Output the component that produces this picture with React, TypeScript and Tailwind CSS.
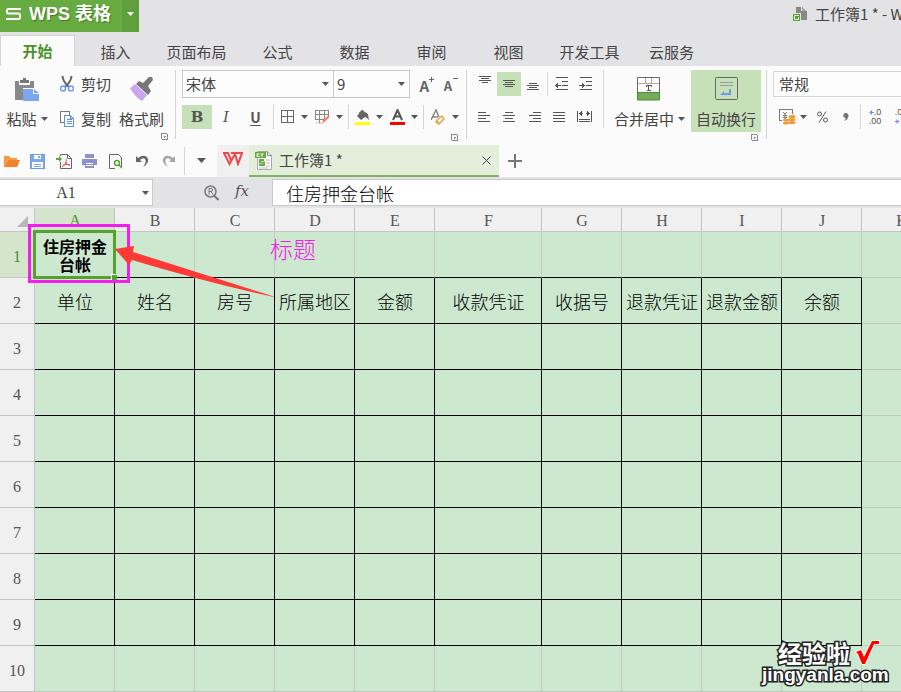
import type { ReactNode } from 'react'
import clsx from 'clsx'

const MENU = [
  { label: '插入', width: 'w-[77px]' },
  { label: '页面布局', width: 'w-[85px]' },
  { label: '公式', width: 'w-[77px]' },
  { label: '数据', width: 'w-[77px]' },
  { label: '审阅', width: 'w-[77px]' },
  { label: '视图', width: 'w-[77px]' },
  { label: '开发工具', width: 'w-[85px]' },
  { label: '云服务', width: 'w-[79px]' },
]

const COLUMNS = ['A', 'B', 'C', 'D', 'E', 'F', 'G', 'H', 'I', 'J', 'K']
const HEADINGS = ['单位', '姓名', '房号', '所属地区', '金额', '收款凭证', '收据号', '退款凭证', '退款金额', '余额']
const ROWS = [1, 2, 3, 4, 5, 6, 7, 8, 9, 10]

function Caret({ className = 'text-[#555]' }: { className?: string }) {
  return (
    <svg className={clsx('shrink-0', className)} width="7" height="4" viewBox="0 0 7 4" fill="currentColor">
      <path d="M0 0h7L3.5 4z" />
    </svg>
  )
}

function Launcher({ label }: { label: string }) {
  return (
    <button aria-label={label} className="block h-[7px] w-[7px] self-end">
      <svg width="7" height="7" viewBox="0 0 7 7" fill="none" stroke="#888" shapeRendering="crispEdges">
        <path d="M.5 6V.5H6M6.500 1v5.500H1M3.500 5V3.500H5" />
      </svg>
    </button>
  )
}

function Lines({ rows, className }: { rows: [number, number, number][]; className?: string }) {
  return (
    <svg className={className} width="14" height="14" viewBox="0 0 14 14" stroke="#555" strokeWidth="1" shapeRendering="crispEdges">
      {rows.map(([x, y, w]) => (
        <path key={y} d={`M${x} ${y}.5h${w}`} />
      ))}
    </svg>
  )
}

function Tool({ label, className, children }: { label: string; className?: string; children: ReactNode }) {
  return (
    <button aria-label={label} className={clsx('flex h-6 shrink-0 items-center justify-center', className)}>
      {children}
    </button>
  )
}

function Divider({ className }: { className: string }) {
  return <div className={clsx('w-px shrink-0 bg-[#d4d4d4]', className)} />
}

function TitleBar() {
  return (
    <header className="flex h-8 items-start bg-[#e3e3e5]">
      <button className="flex h-8 w-[122px] items-center bg-[#67ab41] pb-1 pl-1.5 font-['Liberation_Sans','Noto_Sans_CJK_SC',sans-serif] text-lg leading-6 font-bold whitespace-nowrap text-white [text-shadow:1px_1px_1px_#3f7a22]">
        <svg className="mr-2" width="15" height="12" viewBox="0 0 15 12" fill="none" stroke="#fff" strokeWidth="2">
          <path d="M15 1H2.5Q1 1 1 2.5V4Q1 5.5 2.5 5.5h10Q14 5.5 14 7v2.5Q14 11 12.500 11H0" />
        </svg>
        WPS 表格
      </button>
      <button aria-label="应用菜单" className="flex h-8 w-[17px] items-center justify-center bg-[#5f9f3c] pb-1">
        <Caret className="text-white" />
      </button>
      <div className="ml-auto flex w-[108px] items-center overflow-hidden pt-1 text-[15px] leading-5 whitespace-nowrap text-[#444]">
        <svg className="mr-2 shrink-0" width="14" height="15" viewBox="0 0 14 15" shapeRendering="crispEdges">
          <path d="M3 0h5v4h6v9H8V6H3z" fill="#888" />
          <path d="M9 0l5 4H9z" fill="#aaa" />
          <path d="M.5 7.500h6v6h-6z" fill="#e3e3e5" stroke="#4ea72a" />
          <path d="M5.500 9.500h-3v1h2v1h-3" fill="none" stroke="#4ea72a" />
        </svg>
        工作簿1 * - WPS 表格
      </div>
    </header>
  )
}

function MenuTabs() {
  return (
    <nav className="flex h-[34px] items-end bg-[#e3e3e5] text-[15px] leading-5 whitespace-nowrap text-[#444]">
      <button className="mr-[2px] h-[31px] w-[75px] border border-b-0 border-[#d3d3d6] bg-[#fbfbfb] font-bold text-[#4a9128]">开始</button>
      {MENU.map((item) => (
        <button key={item.label} className={clsx('h-[29px] shrink-0', item.width)}>
          {item.label}
        </button>
      ))}
    </nav>
  )
}

function ClipboardGroup() {
  return (
    <div className="flex w-[175px] shrink-0 pl-1.5">
      <button className="flex w-[42px] flex-col items-center pt-2">
        <svg width="24" height="24" viewBox="0 0 24 24">
          <path d="M0 3h4v4h11V3h4v7H8v12H0z" fill="#888" />
          <path d="M5 2h3V0h3v2h3v3H5z" fill="#777" />
          <path d="M8 11h10v5h6v7H8z" fill="#7ea6ee" />
          <path d="M19 11l5 4h-5z" fill="#7ea6ee" />
        </svg>
        <span className="flex items-center gap-1 pt-[7px]">
          粘贴 <Caret />
        </span>
      </button>
      <div className="flex flex-col gap-[15px] pt-1 pl-3">
        <button className="flex items-center gap-[7px]">
          <svg width="14" height="16" viewBox="0 0 14 16" fill="none" strokeWidth="1.500">
            <path d="M2.500 0Q3 6 9 11M11.500 0Q11 6 5 11" stroke="#666" strokeWidth="2" />
            <circle cx="3" cy="12.500" r="2.500" stroke="#6f9ae6" />
            <circle cx="11" cy="12.500" r="2.500" stroke="#6f9ae6" />
          </svg>
          剪切
        </button>
        <button className="flex items-center gap-[7px]">
          <svg width="14" height="16" viewBox="0 0 14 16" fill="none" shapeRendering="crispEdges">
            <path d="M3.500 11.500h-3V.5h9v3" stroke="#777" />
            <path d="M4.500 4.500h6l3 3v8h-9zM10.500 4.500v3h3M6.500 8.500h5M6.500 10.500h5M6.500 12.500h5" stroke="#5f90e4" />
          </svg>
          复制
        </button>
      </div>
      <button className="flex flex-col items-center pt-[7px] pl-2">
        <svg width="24" height="24" viewBox="0 0 24 24">
          <path d="M5 7l12 11-5 6q-7-4-12-13 2-1 5-4z" fill="#caa5f0" />
          <path d="M9 4l4 2 6-6h3l1 3-5 6 3 5-3 4L6 7z" fill="#777" />
        </svg>
        <span className="pt-2">格式刷</span>
      </button>
      <div className="-ml-[3px] flex h-[70px] items-end">
        <Launcher label="剪贴板设置" />
      </div>
    </div>
  )
}

function FontGroup() {
  return (
    <div className="flex w-[290px] shrink-0 flex-col pl-1.5">
      <div className="flex h-7 items-stretch">
        <label className="flex w-[152px] items-center border border-[#c8c8c8] bg-[#fdfdfd] pr-1 pl-[3px]">
          <select aria-label="字体" className="min-w-0 flex-1 appearance-none leading-5 outline-none">
            <option>宋体</option>
          </select>
          <Caret />
        </label>
        <label className="-ml-px flex w-[77px] items-center border border-[#c8c8c8] bg-[#fdfdfd] pr-1 pl-[3px]">
          <select aria-label="字号" className="min-w-0 flex-1 appearance-none leading-5 outline-none">
            <option>9</option>
          </select>
          <Caret />
        </label>
        <button aria-label="增大字号" className="flex w-6 items-center justify-end font-bold text-[#666]">
          <span className="pt-1 text-[15px] leading-5">A</span>
          <svg className="mt-[7px] self-start" width="5" height="5" viewBox="0 0 5 5" fill="#666">
            <path d="M2 0h1v2h2v1H3v2H2V3H0V2h2z" />
          </svg>
        </button>
        <button aria-label="减小字号" className="flex w-6 items-center justify-end font-bold text-[#666]">
          <span className="pt-1 text-[13px] leading-5">A</span>
          <svg className="mt-2 self-start" width="6" height="2" viewBox="0 0 6 2" fill="#666">
            <path d="M1 0h5v1H1z" />
          </svg>
        </button>
      </div>
      <div className="mt-[7px] flex h-6 items-center text-[#555]">
        <Tool label="加粗" className="w-[30px] bg-[#c6e0b8] font-['DejaVu_Serif',serif] text-[15px] font-bold">B</Tool>
        <Tool label="倾斜" className="w-7 font-['DejaVu_Serif',serif] text-[15px] italic">I</Tool>
        <Tool label="下划线" className="w-[31px] text-sm leading-5 font-bold underline underline-offset-2">U</Tool>
        <Divider className="mr-[7px] ml-[2px] h-6" />
        <Tool label="边框" className="w-[27px] gap-1.5">
          <svg width="14" height="14" viewBox="0 0 14 14" fill="none" stroke="#666" shapeRendering="crispEdges">
            <path d="M.5.5h12v12H.5zM6.500 1v12M1 6.500h12" />
          </svg>
          <Caret />
        </Tool>
        <Tool label="绘图边框" className="ml-[7px] w-7 gap-1.5">
          <svg width="15" height="14" viewBox="0 0 15 14" fill="none" stroke="#888">
            <path d="M.5 10V.5h13v5M1 4.500h12M1 9.500h8M4.500 1v12M9.500 1v8" shapeRendering="crispEdges" />
            <path d="M14 6L8 12" stroke="#ee7f4b" strokeWidth="2" />
            <path d="M1 13h7" stroke="#ee7f4b" strokeDasharray="1 1" />
          </svg>
          <Caret />
        </Tool>
        <Divider className="mr-1.5 ml-[5px] h-6" />
        <Tool label="填充颜色" className="w-7 gap-1.5">
          <svg width="15" height="16" viewBox="0 0 15 16">
            <path d="M7 1l6 4 1 6-2-2-2-1-4 3-4-4z" fill="#666" />
            <path d="M4 4l4-3" stroke="#666" />
            <path d="M0 13h15v3H0z" fill="#ff0" />
          </svg>
          <Caret />
        </Tool>
        <Tool label="字体颜色" className="ml-[7px] w-7 gap-1.5">
          <svg width="15" height="16" viewBox="0 0 15 16">
            <path d="M3 11L7.500 1 12 11M4.500 7.500h6" fill="none" stroke="#555" strokeWidth="2" />
            <path d="M0 13h15v3H0z" fill="#f00" />
          </svg>
          <Caret />
        </Tool>
        <Divider className="mr-[7px] ml-[5px] h-6" />
        <Tool label="清除格式" className="w-7 gap-1.5">
          <svg width="15" height="16" viewBox="0 0 15 16" fill="none">
            <path d="M0 11L5 1l3 7M2 8h5" stroke="#888" strokeWidth="1.500" />
            <path d="M6 11l5-4 2 3-5 5-3-2z" stroke="#eaa24c" strokeWidth="1.500" />
            <path d="M6 11l3 3-1 1-3-2z" fill="#eaa24c" />
          </svg>
          <Caret />
        </Tool>
      </div>
      <div className="flex justify-end pt-[5px] pr-2">
        <Launcher label="字体设置" />
      </div>
    </div>
  )
}

function AlignGroup() {
  return (
    <div className="flex w-[136px] shrink-0 flex-col pl-1.5 pt-[2px]">
      <div className="flex h-6 items-center">
        <Tool label="顶端对齐" className="w-6">
          <Lines className="mb-2" rows={[[1, 3, 12], [3, 5, 8], [1, 7, 12], [4, 9, 6]]} />
        </Tool>
        <Tool label="垂直居中" className="w-6 bg-[#c6e0b8]">
          <Lines rows={[[1, 3, 12], [3, 5, 8], [1, 7, 12], [3, 9, 8]]} />
        </Tool>
        <Tool label="底端对齐" className="w-6">
          <Lines className="mt-1" rows={[[3, 4, 8], [1, 6, 12], [3, 8, 8], [1, 10, 12]]} />
        </Tool>
        <Divider className="mx-[2px] h-6" />
        <Tool label="减少缩进" className="w-6">
          <svg width="14" height="14" viewBox="0 0 14 14" stroke="#555" fill="#555" shapeRendering="crispEdges">
            <path d="M1 .5h12M7 4.500h6M7 8.500h6M1 12.500h12M2 8.500h4" fill="none" />
            <path d="M0 8.500l3-3v6z" stroke="none" />
          </svg>
        </Tool>
        <Tool label="增加缩进" className="w-6">
          <svg width="14" height="14" viewBox="0 0 14 14" stroke="#555" fill="#555" shapeRendering="crispEdges">
            <path d="M1 .5h12M7 4.500h6M7 8.500h6M1 12.500h12M0 8.500h4" fill="none" />
            <path d="M6 8.500l-3-3v6z" stroke="none" />
          </svg>
        </Tool>
      </div>
      <div className="mt-[9px] flex h-6 items-center">
        <Tool label="左对齐" className="w-[22px]">
          <Lines rows={[[1, 2, 8], [1, 5, 12], [1, 8, 8], [1, 11, 12]]} />
        </Tool>
        <Tool label="居中" className="w-7">
          <Lines rows={[[3, 2, 8], [1, 5, 12], [3, 8, 8], [1, 11, 12]]} />
        </Tool>
        <Tool label="右对齐" className="w-6">
          <Lines rows={[[5, 2, 8], [1, 5, 12], [5, 8, 8], [1, 11, 12]]} />
        </Tool>
        <Tool label="两端对齐" className="w-6">
          <Lines rows={[[1, 2, 12], [1, 5, 12], [1, 8, 12], [1, 11, 12]]} />
        </Tool>
        <Tool label="分散对齐" className="w-[26px]">
          <svg width="15" height="12" viewBox="0 0 15 12" stroke="#555" fill="#555" shapeRendering="crispEdges">
            <path d="M.5 0v11M14.500 0v11M3 2.500h3M9 2.500h3M2 8.500h11M2 10.500h11" fill="none" />
            <path d="M2 2.500l3-3v6zM13 2.500l-3-3v6z" stroke="none" />
          </svg>
        </Tool>
      </div>
    </div>
  )
}

function MergeGroup() {
  return (
    <div className="flex w-[162px] shrink-0">
      <button className="flex w-[87px] flex-col items-center pt-[7px]">
        <svg className="ml-[2px]" width="23" height="24" viewBox="0 0 23 24" fill="none">
          <path d="M.5.5h22v22H.5z" fill="#fff" stroke="#666" />
          <path d="M1 6.500h21M8.500 1v5M14.500 1v5" stroke="#aaa" shapeRendering="crispEdges" />
          <path d="M.5 15.500h22v7.500H.5z" fill="#76ac59" stroke="#4f8d34" />
          <path d="M9.500 10V8.500h5V10M11.500 8.500v5M10 13.500h4" stroke="#555" />
        </svg>
        <span className="flex items-center gap-1 pt-2 pl-1">
          合并居中 <Caret />
        </span>
      </button>
      <div className="w-[70px]">
        <button className="flex h-[62px] w-[70px] flex-col items-center bg-[#c6e0b8] pt-[7px]">
          <svg width="23" height="24" viewBox="0 0 23 24" fill="none">
            <rect x=".5" y=".5" width="22" height="22" rx="1" stroke="#666" />
            <path d="M5 5.500h13M5 8.500h13" stroke="#999" shapeRendering="crispEdges" />
            <path d="M14 12h2v6H5l4-4v2h5z" fill="#6f9ae6" />
          </svg>
          <span className="pt-2">自动换行</span>
        </button>
        <div className="flex justify-end pt-[2px] pr-[3px]">
          <Launcher label="对齐设置" />
        </div>
      </div>
    </div>
  )
}

function NumberGroup() {
  return (
    <div className="flex min-w-0 flex-1 flex-col overflow-hidden pt-px pl-1.5">
      <label className="flex h-[26px] w-[180px] items-center border border-[#d4d4d4] bg-[#fdfdfd] pl-[5px]">
        <select aria-label="数字格式" className="min-w-0 flex-1 appearance-none leading-5 outline-none">
          <option>常规</option>
        </select>
      </label>
      <div className="mt-2 flex h-6 items-center pl-1.5 text-[#555]">
        <Tool label="货币样式" className="w-7 gap-1">
          <svg width="17" height="16" viewBox="0 0 17 16" fill="none">
            <path d="M3 11.500H.5V.5h13V5" stroke="#777" shapeRendering="crispEdges" />
            <path d="M4 3l2 2 2-2M6 5v5M4 6.500h4M4 8.500h4" stroke="#777" />
            <g fill="#ee9a32">
              <ellipse cx="13" cy="7.500" rx="3.500" ry="1.500" />
              <ellipse cx="13" cy="10.500" rx="3.500" ry="1.500" />
              <ellipse cx="13" cy="13.500" rx="3.500" ry="1.500" />
              <ellipse cx="7" cy="11" rx="3" ry="1.500" />
              <ellipse cx="7" cy="14" rx="3" ry="1.500" />
            </g>
          </svg>
          <Caret />
        </Tool>
        <Tool label="百分比" className="w-[30px]">
          <svg width="11" height="12" viewBox="0 0 11 12" fill="none" stroke="#555">
            <circle cx="2.500" cy="3" r="2" />
            <circle cx="8.500" cy="9" r="2" />
            <path d="M9 .5l-7 11" />
          </svg>
        </Tool>
        <Tool label="千位分隔" className="w-[18px]">
          <svg width="6" height="8" viewBox="0 0 6 8" fill="#777">
            <path d="M3 0a2.500 2.500 0 012.500 3Q5 7 1 8q1.500-1.500 1.500-3A2.500 2.500 0 013 0z" />
          </svg>
        </Tool>
        <Divider className="mr-[7px] ml-[5px] h-6" />
        <Tool label="增加小数位" className="w-[14px] flex-col font-['Liberation_Sans',sans-serif] text-[9px] leading-[9px]">
          <span className="flex items-center">
            <svg width="5" height="5" viewBox="0 0 5 5" fill="#6f9ae6"><path d="M0 2.500L3 0v2h2v1H3v2z" /></svg>
            .0
          </span>
          <span>.00</span>
        </Tool>
        <Tool label="减少小数位" className="ml-3 w-[14px] flex-col font-['Liberation_Sans',sans-serif] text-[9px] leading-[9px]">
          <span>.00</span>
          <span className="flex items-center">
            <svg width="6" height="5" viewBox="0 0 5 5" fill="#6f9ae6"><path d="M5 2.500L2 0v2H0v1h2v2z" /></svg>
            .0
          </span>
        </Tool>
      </div>
    </div>
  )
}

function Ribbon() {
  return (
    <section className="flex h-[79px] items-start overflow-hidden bg-[#fbfbfb] pt-1 text-[15px] leading-5 whitespace-nowrap text-[#444]">
      <ClipboardGroup />
      <Divider className="h-[69px]" />
      <FontGroup />
      <Divider className="h-[69px]" />
      <AlignGroup />
      <Divider className="h-[58px]" />
      <MergeGroup />
      <Divider className="h-[69px]" />
      <NumberGroup />
    </section>
  )
}

function QuickAccess() {
  return (
    <section className="flex h-8 items-stretch bg-[#fbfbfb] text-[15px] leading-5 text-[#444]">
      <div className="flex w-[184px] items-center">
        <Tool label="打开" className="w-[23px]">
          <svg width="16" height="14" viewBox="0 0 16 14">
            <path d="M0 13V2h5l2 2h6v2H4z" fill="#f79a45" />
            <path d="M4 6h12l-3 7H0z" fill="#f2832a" />
          </svg>
        </Tool>
        <Tool label="保存" className="w-[29px]">
          <svg width="15" height="15" viewBox="0 0 15 15" fill="none" shapeRendering="crispEdges">
            <path d="M.5.5h14v14H.5z" fill="#7ea6ee" stroke="#6f9ae6" />
            <path d="M4 1h7v4H4zM2 8h11v6H2z" fill="#fff" />
            <path d="M8 2h2v2H8zM4 10h7v1H4zM4 12h7v1H4z" fill="#7ea6ee" />
          </svg>
        </Tool>
        <Tool label="输出为PDF" className="w-6">
          <svg width="16" height="15" viewBox="0 0 16 15" fill="none">
            <path d="M4.500 2V.5h7l4 4v10h-11V8M11.500.5v4h4" stroke="#666" />
            <path d="M0 4h3V2l3 3-3 3V6H0z" fill="#5aa637" />
            <path d="M10 5c1 5-1 6-4 8M9 8c2 3 4 3 5 3M7 11c2-1 4-1 7 0" stroke="#dd4b42" />
          </svg>
        </Tool>
        <Tool label="打印" className="w-[27px]">
          <svg width="15" height="14" viewBox="0 0 15 14" shapeRendering="crispEdges">
            <path d="M3 0h9v4H3zM0 5h15v6H0zM3 9h9v5H3z" fill="#8e90cd" />
            <path d="M4 9h7v1H4zM4 11h7v1H4z" fill="#fff" />
          </svg>
        </Tool>
        <Tool label="打印预览" className="w-[26px]">
          <svg width="14" height="15" viewBox="0 0 14 15" fill="none">
            <path d="M6 14.500H.5V.5h9l3 3V14" stroke="#666" />
            <circle cx="8" cy="9" r="2.500" stroke="#5aa637" strokeWidth="1.500" />
            <path d="M10 11l3 3" stroke="#5aa637" strokeWidth="1.500" />
          </svg>
        </Tool>
        <Tool label="撤销" className="w-[26px]">
          <svg width="13" height="13" viewBox="0 0 13 13" fill="#666">
            <path d="M0 1v6h6L4 5q3-3 5-1 2 3-2 8 6-4 5-8Q9-2 2 3z" />
          </svg>
        </Tool>
        <Tool label="恢复" className="w-[26px]">
          <svg width="13" height="13" viewBox="0 0 13 13" fill="#a5a5a5">
            <path d="M13 1v6H7l2-2Q6 2 4 4q-2 3 2 8Q0 8 1 4q3-6 10-1z" />
          </svg>
        </Tool>
      </div>
      <Divider className="mt-[2px] h-7" />
      <Tool label="自定义快速访问" className="mt-[3px] w-8">
        <svg width="9" height="5" viewBox="0 0 9 5" fill="#555"><path d="M0 0h9L4.500 5z" /></svg>
      </Tool>
      <button aria-label="WPS 首页" className="flex w-8 items-center justify-center bg-[#f0f0f0] pb-1">
        <svg width="20" height="14" viewBox="0 0 20 14" fill="none" stroke="#f0474c" strokeWidth="2">
          <path d="M0 1h5l3 7M1 1l5.500 11L12 2l3 10 4-11H8" />
        </svg>
      </button>
      <div className="flex w-[250px] items-center border-b-2 border-[#7fb562] bg-[#e3eedb] pr-[7px] pl-1.5">
        <svg className="mr-[7px]" width="17" height="19" viewBox="0 0 17 19" fill="none">
          <path d="M2.500.5h10l4 4v14h-14z" fill="#fff" stroke="#aaa" />
          <path d="M12.500.5v4h4" stroke="#888" />
          <path d="M0 1h11v6H0z" fill="#67ab41" />
          <path d="M4.500 3H2v2.500h2.500M5.500 3h3M7 3v3" stroke="#fff" />
          <path d="M9 9H5v2.500h4V14H4" stroke="#67ab41" strokeWidth="2" />
          <path d="M11 9h4M11 12h4M11 15h4M4 17h9" stroke="#bbb" />
        </svg>
        <a href="#sheet" className="flex-1">工作簿1 *</a>
        <button aria-label="关闭" className="flex h-5 w-[10px] items-center">
          <svg width="9" height="9" viewBox="0 0 9 9" stroke="#444"><path d="M.5.5l8 8M8.500.5l-8 8" /></svg>
        </button>
      </div>
      <button aria-label="新建" className="flex w-8 items-center justify-center">
        <svg width="14" height="14" viewBox="0 0 14 14" fill="#777"><path d="M6 0h2v6h6v2H8v6H6V8H0V6h6z" /></svg>
      </button>
    </section>
  )
}

function FormulaBar() {
  return (
    <section className="flex h-[31px] items-start bg-[#e3e3e5] pt-[2px]">
      <div className="flex h-[27px] w-[153px] items-center border border-l-0 border-[#c9c9cc] bg-white pr-[3px]">
        <input aria-label="名称框" defaultValue="A1" className="min-w-0 flex-1 pr-[10px] text-center font-['Liberation_Serif',serif] text-base leading-6 text-[#444] outline-none" />
        <Caret />
      </div>
      <div className="flex h-[27px] w-[119px] items-center justify-end gap-4 pr-[23px]">
        <button aria-label="查找">
          <svg width="15" height="16" viewBox="0 0 15 16" fill="none" stroke="#777">
            <circle cx="6.500" cy="6.500" r="5.500" strokeWidth="1.500" />
            <path d="M5 9.500v-6h2q1.500 0 1.500 1.500T7 6.500H5M7 6.500l2 3" />
            <path d="M10.500 11l4 4" strokeWidth="2" />
          </svg>
        </button>
        <button aria-label="插入函数" className="pb-1 font-['DejaVu_Serif',serif] text-[15px] leading-6 text-[#555] italic">fx</button>
      </div>
      <input
        aria-label="编辑栏"
        defaultValue="住房押金台帐"
        className="h-[27px] min-w-0 flex-1 border border-r-0 border-[#c9c9cc] bg-white pl-[13px] text-lg leading-6 font-light text-black outline-none"
      />
    </section>
  )
}

// Rows 2-9 of A:J carry the printed black frame, everything else keeps the grey grid
function cellBorder(row: number, col: number) {
  if (col > 9 || row > 9) return 'border-[#c1c9c1]'
  if (row === 1) return 'border-r-[#c1c9c1] border-b-black'
  return 'border-black'
}

function Sheet() {
  return (
    <main id="sheet" className="relative flex-1 overflow-hidden bg-[#cce8cf]">
      <table className="w-[942px] table-fixed border-separate border-spacing-0 text-lg leading-6">
        <colgroup>
          <col className="w-[35px]" />
          {COLUMNS.map((name) => (
            <col key={name} className={name === 'F' ? 'w-[107px]' : 'w-[80px]'} />
          ))}
        </colgroup>
        <thead>
          <tr className="h-6 font-['Liberation_Serif',serif] text-base text-[#555]">
            <th className="border-r border-b border-[#c4c4c4] bg-[#f0f0f0] p-0">
              <svg className="mt-1 mr-1.5 ml-auto" width="11" height="11" viewBox="0 0 11 11" fill="#b9b9b9"><path d="M11 0v11H0z" /></svg>
            </th>
            {COLUMNS.map((name, i) => (
              <th
                key={name}
                className={clsx('border-r border-b border-[#c4c4c4] p-0 font-normal', i === 0 ? 'bg-[#d5e5cd] text-[#4a9128]' : 'bg-[#f0f0f0]')}
              >
                <span className="block h-[23px] pt-px pl-px">{name}</span>
              </th>
            ))}
          </tr>
        </thead>
        <tbody>
          {ROWS.map((row) => (
            <tr key={row} className="h-[46px]">
              <th
                className={clsx(
                  "border-r border-b border-[#c4c4c4] p-0 pt-1 font-['Liberation_Serif',serif] text-base font-normal",
                  row === 1 ? 'bg-[#d5e5cd] text-[#4a9128]' : 'bg-[#f0f0f0] text-[#555]'
                )}
              >
                {row}
              </th>
              {COLUMNS.map((name, col) => (
                <td key={name} className={clsx('border-r border-b p-0 pl-px text-center font-light whitespace-nowrap text-black', cellBorder(row, col))}>
                  {row === 1 && col === 0 && (
                    <span className="block text-base leading-[18px] font-bold">
                      住房押金
                      <br />
                      台帐
                    </span>
                  )}
                  {row === 2 && HEADINGS[col]}
                </td>
              ))}
            </tr>
          ))}
        </tbody>
      </table>

      {/* active cell and its fill handle */}
      <div className="pointer-events-none absolute top-[22px] left-[33px] h-[49px] w-[83px] border-3 border-[#56a22f]">
        <div className="absolute -right-1 -bottom-1 h-1.5 w-1.5 border-t border-l border-white bg-[#56a22f]" />
      </div>

      {/* annotations */}
      <div className="pointer-events-none absolute top-4 left-[28px] h-[59px] w-[102px] border-3 border-[#f51cf0]" />
      <svg className="pointer-events-none absolute top-8 left-[115px]" width="164" height="60" viewBox="0 0 164 60" fill="#fd3a35">
        <path d="M0 9L19 6l-1 6q70 22 145 46Q90 42 17 20l-3 5z" />
      </svg>
      <p className="pointer-events-none absolute top-[26px] left-[270px] text-[23px] leading-7 font-light text-[#f51cf0]">标题</p>

      <div className="pointer-events-none absolute top-[431px] left-[762px] font-bold text-white [paint-order:stroke] [-webkit-text-stroke:3px_#222]">
        <div className="flex items-start pl-4">
          <span className="text-2xl leading-7">经验啦</span>
          <svg className="ml-1" width="27" height="28" viewBox="0 0 27 28" fill="none">
            <path d="M2 13l5-2 3 7L18 2h7v3h-5l-9 20H8L4 15z" fill="#f00" stroke="#fff" strokeWidth="1.500" paintOrder="stroke" />
          </svg>
        </div>
        <div className="-mt-1 font-['Liberation_Sans',sans-serif] text-[19px] leading-6">jingyanla.com</div>
      </div>
    </main>
  )
}

export default function App() {
  return (
    <div className="flex h-screen flex-col overflow-hidden bg-[#fbfbfb] font-['Noto_Sans_CJK_SC',sans-serif]">
      <TitleBar />
      <MenuTabs />
      <Ribbon />
      <QuickAccess />
      <FormulaBar />
      <Sheet />
    </div>
  )
}
